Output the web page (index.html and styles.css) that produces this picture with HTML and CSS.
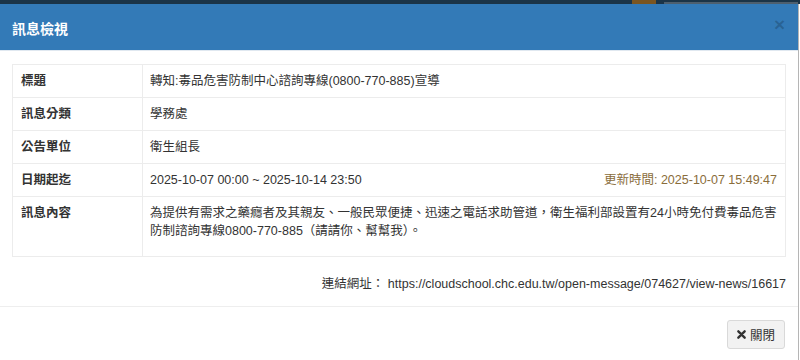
FILE: index.html
```html
<!DOCTYPE html>
<html lang="zh-Hant">
<head>
  <meta charset="UTF-8">
  <title>訊息檢視</title>
  <link rel="stylesheet" href="styles.css">
</head>
<body>

<div class="topbar">
  <span class="logo"></span>
  <span class="site"></span>
</div>

<div class="modal">
  <div class="modal-header">
    <h4 class="modal-title">訊息檢視</h4>
    <button class="close" type="button">×</button>
  </div>

  <div class="modal-body">
    <table class="info">
      <tr>
        <th>標題</th>
        <td>轉知:毒品危害防制中心諮詢專線(0800-770-885)宣導</td>
      </tr>
      <tr>
        <th>訊息分類</th>
        <td>學務處</td>
      </tr>
      <tr>
        <th>公告單位</th>
        <td>衛生組長</td>
      </tr>
      <tr>
        <th>日期起迄</th>
        <td>
          <div class="dates">
            <span>2025-10-07 00:00 ~ 2025-10-14 23:50</span>
            <span class="updated">更新時間: 2025-10-07 15:49:47</span>
          </div>
        </td>
      </tr>
      <tr>
        <th>訊息內容</th>
        <td class="content">為提供有需求之藥癮者及其親友、一般民眾便捷、迅速之電話求助管道，衛生福利部設置有24小時免付費毒品危害防制諮詢專線0800-770-885（請請你、幫幫我）。</td>
      </tr>
    </table>

    <p class="link">連結網址： https://cloudschool.chc.edu.tw/open-message/074627/view-news/16617</p>
  </div>

  <div class="modal-footer">
    <button class="btn" type="button">
      <svg width="9" height="9" viewBox="0 0 10 10"><path d="M1.5 1.5 L8.5 8.5 M8.5 1.5 L1.5 8.5" stroke="#333" stroke-width="2.6" stroke-linecap="round"/></svg>
      關閉
    </button>
  </div>
</div>

</body>
</html>
```

FILE: styles.css
```css
body {
  margin: 0;
  background: #fff;
  font-family: "Liberation Sans", "Noto Sans CJK TC", sans-serif;
  font-size: 12.5px;
  color: #333;
}
.topbar {
  height: 4px;
  overflow: hidden;
  background: #1b3447;
  display: flex;
  padding-left: 632px;
  gap: 8px;
}
.logo {
  width: 24px;
  height: 4px;
  background: #7a5520;
}
.site {
  width: 134px;
  height: 2px;
  margin-top: 2px;
  background: #4d5f6e;
}
.modal {
  width: 798px;
  border-right: 1px solid #b5b5b5;
  height: 356px;
}
.modal-header {
  background: #337ab7;
  height: 47px;
  border-bottom: 1px solid #e0e8f0;
  display: flex;
  align-items: center;
  justify-content: space-between;
  padding: 0 12px;
  box-sizing: border-box;
}
.modal-title {
  margin: 0;
  color: #fff;
  font-size: 14px;
  font-weight: bold;
  padding-top: 1px;
}
.close {
  background: none;
  border: 0;
  padding: 0;
  margin-right: 1px;
  font-family: "Liberation Sans", sans-serif;
  font-size: 19px;
  font-weight: bold;
  line-height: 1;
  color: rgba(0, 0, 0, 0.2);
  margin-top: -5px;
}
.modal-body {
  padding: 13px 12px 0;
}
.info {
  width: 100%;
  border-collapse: collapse;
  border: 1px solid #ececec;
}
.info th,
.info td {
  border: 1px solid #ececec;
  padding: 7px 7px;
  line-height: 18px;
  text-align: left;
  vertical-align: top;
}
.info th {
  width: 114px;
  padding-left: 8px;
  font-weight: bold;
}
.dates {
  display: flex;
  justify-content: space-between;
}
.updated {
  color: #8a6d3b;
  padding-right: 1px;
}
.info td.content {
  padding-bottom: 16px;
  line-height: 17.5px;
  padding-top: 8px;
}
.link {
  margin: 18px 0 0;
  text-align: right;
  line-height: 18px;
}
.modal-footer {
  margin-top: 13px;
  border-top: 1px solid #eee;
  padding: 13px 13px 0;
  display: flex;
  justify-content: flex-end;
}
.btn {
  font-family: "Liberation Sans", "Noto Sans CJK TC", sans-serif;
  font-size: 12.5px;
  color: #333;
  background: #f2f2f2;
  border: 1px solid #d9d9d9;
  border-radius: 3px;
  height: 29px;
  width: 58px;
  padding: 0;
  display: flex;
  align-items: center;
  justify-content: center;
  gap: 4px;
}
```
